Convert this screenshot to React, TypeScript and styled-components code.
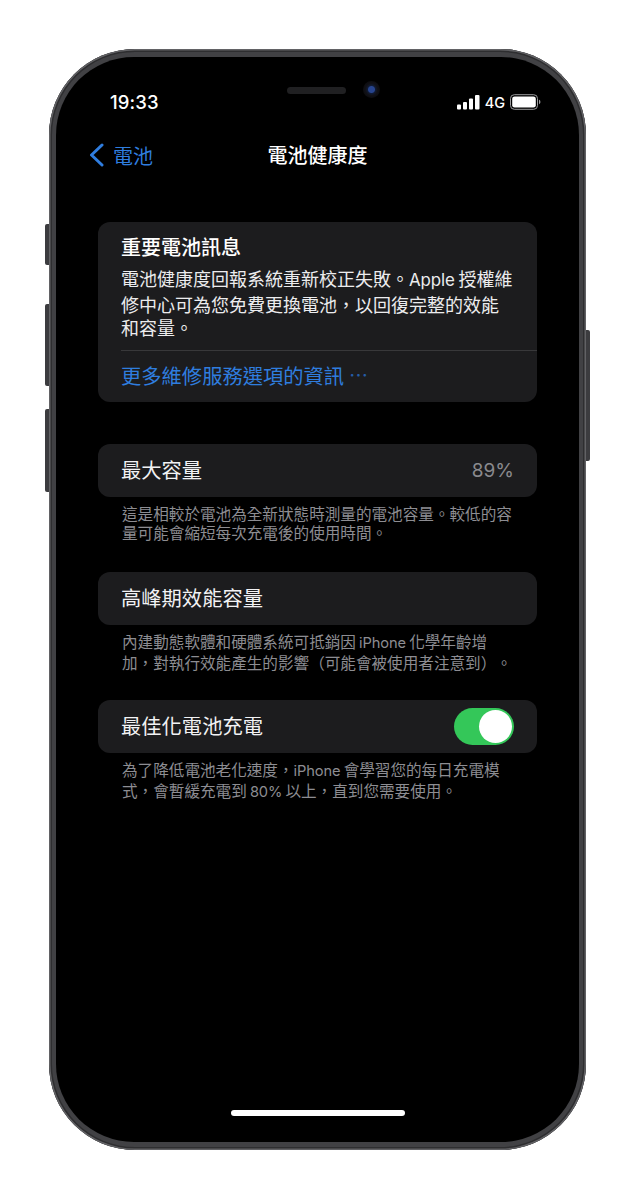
import React from "react";
import styled, { createGlobalStyle } from "styled-components";

const Global = createGlobalStyle`
  html, body { margin: 0; padding: 0; background: #fff; }
  body { font-family: "Inter", "Liberation Sans", "Noto Sans CJK TC", sans-serif; }
`;
const CJK = `"Noto Sans CJK TC", sans-serif`;
const TS = "\u2009";

const Page = styled.div`
  width: 635px;
  height: 1200px;
  padding: 49px 0 0 49px;
  box-sizing: border-box;
  background: #fff;
  overflow: hidden;
`;
const Phone = styled.div`
  position: relative;
  width: 537px;
  height: 1101px;
  box-sizing: border-box;
  padding: 8px 7px;
  border-radius: 86px;
  background: #414144;
  box-shadow: inset 0 0 0 1.5px #626265, inset 0 0 0 3px #2e2e30;
`;
const SideButton = styled.div<{ $side: "left" | "right"; $top: number; $h: number }>`
  position: absolute;
  top: ${(p) => p.$top}px;
  ${(p) => (p.$side === "left" ? "left: -4px;" : "right: -4px;")}
  width: 4px;
  height: ${(p) => p.$h}px;
  border-radius: ${(p) => (p.$side === "left" ? "2px 0 0 2px" : "0 2px 2px 0")};
  background: #3c3c3f;
`;
const Screen = styled.div`
  position: relative;
  height: 100%;
  box-sizing: border-box;
  padding-top: 33px;
  border-radius: 78px;
  background: #000;
  color: #fff;
  overflow: hidden;
`;
const Speaker = styled.div`
  position: absolute;
  top: 30px;
  left: 231px;
  width: 59px;
  height: 7px;
  border-radius: 4px;
  background: #202022;
`;
const Camera = styled.div`
  position: absolute;
  top: 24px;
  left: 307px;
  width: 17px;
  height: 17px;
  border-radius: 50%;
  background: radial-gradient(circle, #27448e 0 3px, #101a33 4px, #111116 6px, #0b0b0e 9px);
`;
const StatusBar = styled.div`
  display: flex;
  justify-content: space-between;
  align-items: center;
  height: 24px;
  padding: 0 38px 0 54px;
`;
const Time = styled.span`
  font-size: 18.5px;
  font-weight: 500;
  letter-spacing: 0.1px;
`;
const StatusIcons = styled.div`
  display: flex;
  align-items: center;
  gap: 5px;
`;
const NetLabel = styled.span`
  font-size: 14.5px;
  font-weight: 500;
`;
const Nav = styled.div`
  position: relative;
  display: flex;
  align-items: center;
  justify-content: center;
  height: 30px;
  margin-top: 26px;
`;
const Back = styled.div`
  position: absolute;
  left: 33px;
  top: 0;
  display: flex;
  align-items: center;
  gap: 9px;
  height: 30px;
  color: #2f7ddf;
  font-family: ${CJK};
  font-size: 20px;
`;
const NavTitle = styled.div`
  font-family: ${CJK};
  font-size: 20px;
  font-weight: 500;
  line-height: 30px;
`;
const Content = styled.div`
  display: flex;
  flex-direction: column;
  padding: 0 42px;
  margin-top: 52px;
  font-family: ${CJK};
  text-spacing-trim: space-all;
`;
const Latin = styled.span`
  font-family: "Inter", "Liberation Sans", sans-serif;
  font-size: 0.94em;
  letter-spacing: -0.1px;
`;
const Line = styled.span`
  display: block;
  white-space: nowrap;
`;
const InfoCard = styled.section`
  height: 180px;
  box-sizing: border-box;
  padding-top: 11px;
  border-radius: 12px;
  background: #1c1c1e;
`;
const InfoTitle = styled.div`
  padding-left: 23px;
  font-size: 20px;
  font-weight: 500;
  line-height: 28px;
`;
const InfoBody = styled.p`
  margin: 6px 0 0;
  padding: 0 15px 0 23px;
  font-size: 18px;
  line-height: 23.5px;
  color: #ececee;
`;
const Divider = styled.div`
  height: 1px;
  margin: 10.5px 0 0 23px;
  background: #38383a;
`;
const InfoLink = styled.div`
  display: flex;
  align-items: center;
  height: 50px;
  padding: 0 0 3px 23px;
  box-sizing: border-box;
  font-size: 20.3px;
  color: #2f7ddf;
`;
const LinkDots = styled.span`
  margin-left: 5px;
  font-size: 19px;
  color: #255da8;
`;
const Row = styled.div<{ $top: number }>`
  display: flex;
  align-items: center;
  justify-content: space-between;
  height: 53px;
  margin-top: ${(p) => p.$top}px;
  padding: 0 23px 2.5px;
  box-sizing: border-box;
  border-radius: 12px;
  background: #1c1c1e;
  font-size: 20.3px;
  color: #f2f2f4;
`;
const RowValue = styled.span`
  font-family: "Inter", "Liberation Sans", sans-serif;
  font-size: 19px;
  color: #8a8a8e;
  margin-top: 2px;
`;
const Toggle = styled.div`
  display: flex;
  justify-content: flex-end;
  align-items: center;
  width: 60px;
  height: 37px;
  padding: 2px;
  margin-top: 3px;
  box-sizing: border-box;
  border-radius: 19px;
  background: #34c759;
`;
const Knob = styled.div`
  width: 33px;
  height: 33px;
  border-radius: 50%;
  background: #fff;
`;
const Footer = styled.p`
  margin: 0 0 7px;
  padding: 6.5px 20px 0 24px;
  font-size: 15.6px;
  line-height: 19px;
  color: #8d8d92;
  height: 68px;
  box-sizing: border-box;
`;
const HomeBar = styled.div`
  position: absolute;
  left: 175px;
  bottom: 26px;
  width: 174px;
  height: 6px;
  border-radius: 3px;
  background: #fff;
`;

const SignalIcon = () => (
  <svg width="23" height="15" viewBox="0 0 23 15" fill="#fff">
    <rect x="0" y="9.5" width="4" height="5" rx="1" />
    <rect x="6" y="7" width="4" height="7.5" rx="1" />
    <rect x="12" y="3.5" width="4" height="11" rx="1" />
    <rect x="18" y="0" width="4.5" height="14.5" rx="1" />
  </svg>
);
const BatteryIcon = () => (
  <svg width="31" height="16" viewBox="0 0 31 16">
    <rect x="0.5" y="0.7" width="27" height="14.6" rx="3.8" fill="none" stroke="#9b9b9d" />
    <rect x="2.2" y="2.4" width="23.6" height="11.2" rx="2.4" fill="#fff" />
    <path d="M29 5.8c1 .3 1.4 1.2 1.4 2.2s-.4 1.9-1.4 2.2z" fill="#9b9b9d" />
  </svg>
);
const ChevronIcon = () => (
  <svg width="15" height="24" viewBox="0 0 15 24" fill="none" stroke="#2f7ddf" strokeWidth="3" strokeLinecap="round" strokeLinejoin="round">
    <path d="M13 2 2.5 12 13 22" />
  </svg>
);

export default function App() {
  return (
    <Page lang="zh-TW">
      <Global />
      <Phone>
        <SideButton $side="left" $top={175} $h={41} />
        <SideButton $side="left" $top={255} $h={82} />
        <SideButton $side="left" $top={360} $h={83} />
        <SideButton $side="right" $top={281} $h={131} />
        <Screen>
          <Speaker />
          <Camera />
          <StatusBar>
            <Time>19:33</Time>
            <StatusIcons>
              <SignalIcon />
              <NetLabel>4G</NetLabel>
              <BatteryIcon />
            </StatusIcons>
          </StatusBar>
          <Nav>
            <Back>
              <ChevronIcon />
              電池
            </Back>
            <NavTitle>電池健康度</NavTitle>
          </Nav>
          <Content>
            <InfoCard>
              <InfoTitle>重要電池訊息</InfoTitle>
              <InfoBody>
                <Line>
                  電池健康度回報系統重新校正失敗。
                  <Latin>Apple</Latin>
                  {TS}授權維
                </Line>
                <Line>修中心可為您免費更換電池，以回復完整的效能</Line>
                <Line>和容量。</Line>
              </InfoBody>
              <Divider />
              <InfoLink>
                更多維修服務選項的資訊
                <LinkDots>⋯</LinkDots>
              </InfoLink>
            </InfoCard>
            <Row $top={42}>
              最大容量
              <RowValue>89%</RowValue>
            </Row>
            <Footer>
              <Line>這是相較於電池為全新狀態時測量的電池容量。較低的容</Line>
              <Line>量可能會縮短每次充電後的使用時間。</Line>
            </Footer>
            <Row $top={0}>高峰期效能容量</Row>
            <Footer>
              <Line>
                內建動態軟體和硬體系統可抵銷因{TS}
                <Latin>iPhone</Latin>
                {TS}化學年齡增
              </Line>
              <Line>加，對執行效能產生的影響（可能會被使用者注意到）。</Line>
            </Footer>
            <Row $top={0}>
              最佳化電池充電
              <Toggle>
                <Knob />
              </Toggle>
            </Row>
            <Footer>
              <Line>
                為了降低電池老化速度，
                <Latin>iPhone</Latin>
                {TS}會學習您的每日充電模
              </Line>
              <Line>
                式，會暫緩充電到{TS}
                <Latin>80%</Latin>
                {TS}以上，直到您需要使用。
              </Line>
            </Footer>
          </Content>
          <HomeBar />
        </Screen>
      </Phone>
    </Page>
  );
}
